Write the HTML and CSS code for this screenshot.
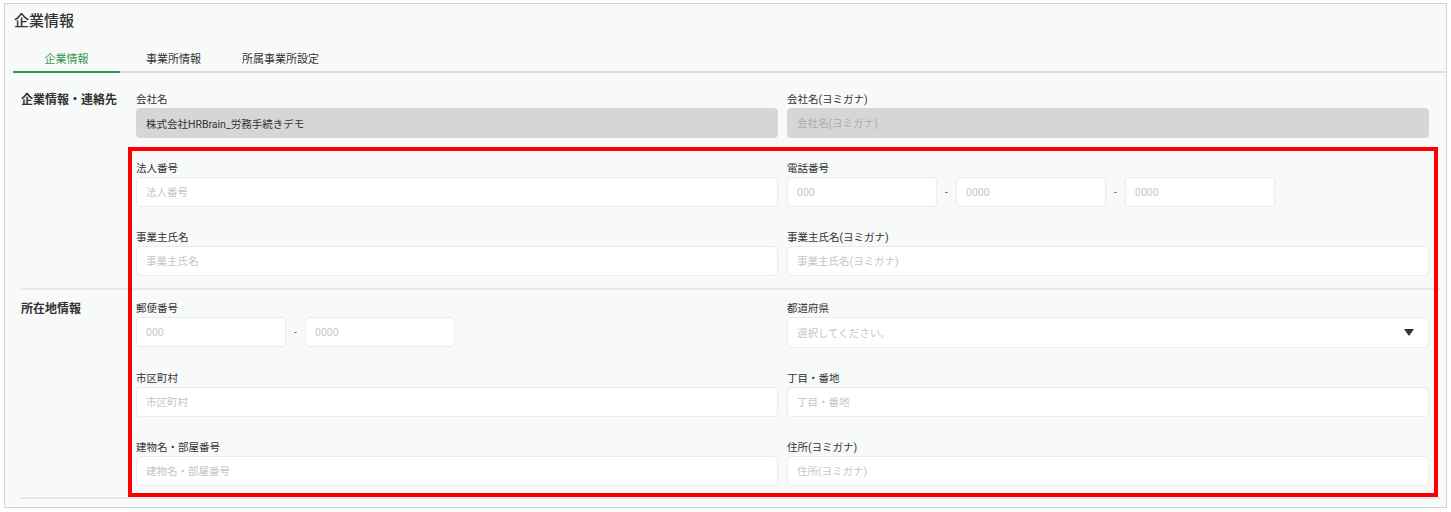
FILE: index.html
```html
<!DOCTYPE html>
<html lang="ja">
<head>
<meta charset="utf-8">
<title>企業情報</title>
<link rel="stylesheet" href="styles.css">
</head>
<body>
<div class="frame">
  <h1 class="title">企業情報</h1>
  <nav class="tabs">
    <div class="tab active">企業情報</div>
    <div class="tab">事業所情報</div>
    <div class="tab">所属事業所設定</div>
  </nav>

  <section class="section first">
    <div class="section-label">企業情報・連絡先</div>
    <div class="fields">
      <div class="field">
        <div class="label">会社名</div>
        <input class="input" disabled value="株式会社HRBrain_労務手続きデモ">
      </div>
      <div class="field">
        <div class="label">会社名(ヨミガナ)</div>
        <input class="input" disabled placeholder="会社名(ヨミガナ)">
      </div>
      <div class="field">
        <div class="label">法人番号</div>
        <input class="input" placeholder="法人番号">
      </div>
      <div class="field">
        <div class="label">電話番号</div>
        <div class="group">
          <input class="input short" placeholder="000">
          <span class="sep">-</span>
          <input class="input short" placeholder="0000">
          <span class="sep">-</span>
          <input class="input short" placeholder="0000">
        </div>
      </div>
      <div class="field">
        <div class="label">事業主氏名</div>
        <input class="input" placeholder="事業主氏名">
      </div>
      <div class="field">
        <div class="label">事業主氏名(ヨミガナ)</div>
        <input class="input" placeholder="事業主氏名(ヨミガナ)">
      </div>
    </div>
  </section>

  <section class="section second">
    <div class="section-label">所在地情報</div>
    <div class="fields">
      <div class="field">
        <div class="label">郵便番号</div>
        <div class="group">
          <input class="input short" placeholder="000">
          <span class="sep">-</span>
          <input class="input short" placeholder="0000">
        </div>
      </div>
      <div class="field">
        <div class="label">都道府県</div>
        <div class="select">
          <span class="select-text">選択してください。</span>
          <svg class="caret" width="10" height="7" viewBox="0 0 10 7"><polygon points="0,0 10,0 5,7" fill="#333"/></svg>
        </div>
      </div>
      <div class="field">
        <div class="label">市区町村</div>
        <input class="input" placeholder="市区町村">
      </div>
      <div class="field">
        <div class="label">丁目・番地</div>
        <input class="input" placeholder="丁目・番地">
      </div>
      <div class="field">
        <div class="label">建物名・部屋番号</div>
        <input class="input" placeholder="建物名・部屋番号">
      </div>
      <div class="field">
        <div class="label">住所(ヨミガナ)</div>
        <input class="input" placeholder="住所(ヨミガナ)">
      </div>
    </div>
  </section>
</div>
<div class="highlight"></div>
</body>
</html>
```

FILE: styles.css
```css
* { box-sizing: border-box; }
html, body { margin: 0; padding: 0; background: #ffffff; }
body {
  font-family: Roboto, "Noto Sans CJK JP", sans-serif;
  color: #333333;
  padding-top: 3px;
}
.frame {
  margin: 0 4px;
  border: 1px solid #d4d4d4;
  background: #f8f9f9;
  padding: 6px 0 8px 8px;
}
.title {
  margin: 0 0 16px 1px;
  font-size: 15px;
  line-height: 22px;
  font-weight: 500;
  color: #333;
}
.tabs {
  display: flex;
  border-bottom: 2px solid #dedede;
}
.tab {
  width: 107px;
  text-align: center;
  font-size: 11px;
  line-height: 23px;
  color: #333;
  margin-bottom: -2px;
  border-bottom: 2px solid transparent;
}
.tab.active {
  color: #2f9a4f;
  border-bottom-color: #2f9a4f;
}
.section {
  display: flex;
  margin: 0 6px 0 8px;
  border-bottom: 2px solid #e6e6e6;
}
.section.first { padding: 19px 0 12px; }
.section.second { padding: 11px 0 11px; }
.section-label {
  width: 115px;
  flex: none;
  font-size: 12px;
  line-height: 16px;
  font-weight: 700;
  color: #333;
}
.fields {
  flex: 1;
  display: grid;
  grid-template-columns: 1fr 1fr;
  column-gap: 9px;
  row-gap: 23px;
  padding-right: 11px;
}
.label {
  font-size: 10.5px;
  line-height: 16px;
  color: #333;
}
.input {
  display: block;
  width: 100%;
  height: 30px;
  margin: 0;
  border: 1px solid #ebebeb;
  border-radius: 4px;
  background: #ffffff;
  padding: 0 9px;
  font-family: Roboto, "Noto Sans CJK JP", sans-serif;
  font-size: 10.5px;
  color: #333;
  outline: none;
}
.input::placeholder { color: #c6c6c6; }
.input:disabled {
  background: #d6d6d6;
  border-color: #d6d6d6;
  color: #333;
  -webkit-text-fill-color: #333;
  opacity: 1;
}
.input:disabled::placeholder { color: #ababab; -webkit-text-fill-color: #ababab; }
.group {
  display: flex;
  align-items: center;
}
.input.short { width: 150px; }
.sep {
  width: 19px;
  text-align: center;
  font-size: 10px;
  color: #555;
}
.select {
  display: flex;
  align-items: center;
  justify-content: space-between;
  height: 31px;
  border: 1px solid #ebebeb;
  border-radius: 4px;
  background: #fff;
  padding: 0 14px 0 9px;
}
.select-text {
  font-size: 10.5px;
  color: #c6c6c6;
}
.caret { display: block; }
.highlight {
  position: absolute;
  left: 128px;
  top: 147px;
  width: 1310px;
  height: 350px;
  border: 4px solid #ff0000;
  pointer-events: none;
}
```
